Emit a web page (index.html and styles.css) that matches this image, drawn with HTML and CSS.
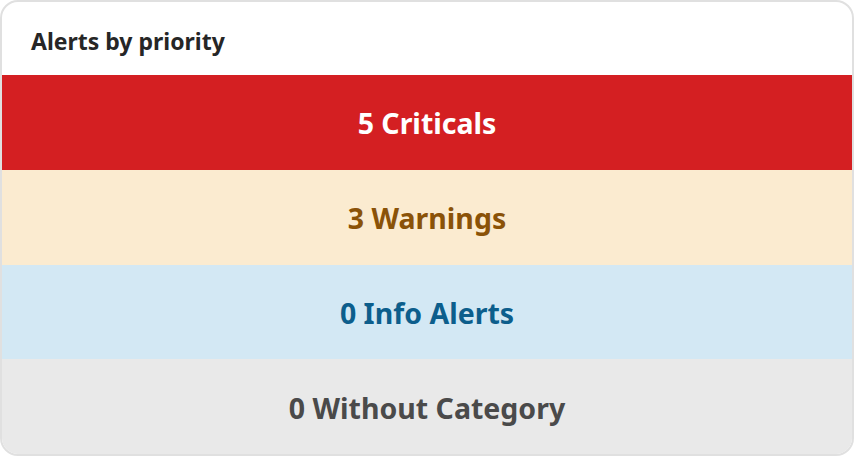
FILE: index.html
```html
<!DOCTYPE html>
<html lang="en">
<head>
<meta charset="UTF-8" />
<meta name="viewport" content="width=device-width, initial-scale=1" />
<title>Alerts by priority</title>
<link rel="stylesheet" href="styles.css">
</head>
<body>

<div class="card">
  <div class="card-header">
    <h2 class="card-title">Alerts by priority</h2>
  </div>
  <div class="priority critical">5 Criticals</div>
  <div class="priority warning">3 Warnings</div>
  <div class="priority info">0 Info Alerts</div>
  <div class="priority none">0 Without Category</div>
</div>

</body>
</html>
```

FILE: styles.css
```css
body {
  font-family: "Noto Sans", "Open Sans", sans-serif;
  background: #fff;
  margin: 0; padding: 0;
}
/* Carte principale */
.card {
  box-sizing: border-box;
  width: 854px;
  height: 456px;
  border: 2px solid #e0e0e0;
  border-radius: 18px;
  overflow: hidden;
  display: flex;
  flex-direction: column;
  background: #fff;
}
.card-header {
  box-sizing: border-box;
  height: 73px;
  flex-shrink: 0;
  display: flex;
  align-items: center;
  padding: 5px 29px 0;
}
.card-title {
  margin: 0;
  font-size: 23px;
  font-weight: 700;
  color: #262626;
}
/* Lignes par priorité */
.priority {
  flex: 1;
  display: flex;
  justify-content: center;
  align-items: center;
  padding-top: 2px;
  font-size: 28.5px;
  font-weight: 700;
}
.critical {
  background: #d41f22;
  color: #fff;
}
.warning {
  background: #fbebd0;
  color: #8a5208;
}
.info {
  background: #d3e8f4;
  color: #0c5e8c;
}
.none {
  background: #e9e9e9;
  color: #4a4a4a;
}
```
